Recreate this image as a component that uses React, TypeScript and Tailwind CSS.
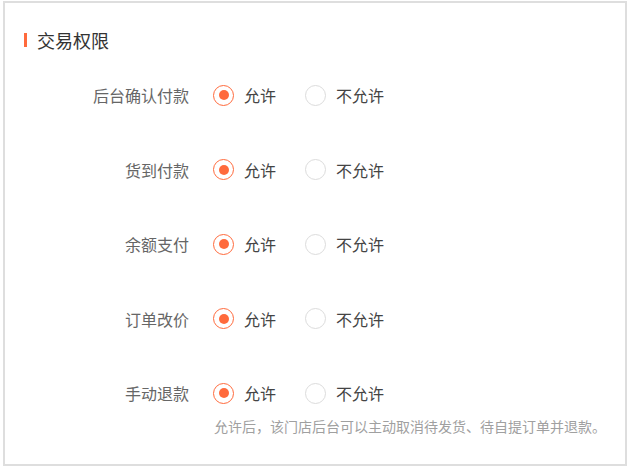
const rows = ["后台确认付款", "货到付款", "余额支付", "订单改价", "手动退款"]

function Radio({ checked }: { checked: boolean }) {
  return (
    <span
      className={
        checked
          ? "shrink-0 w-[21px] h-[21px] rounded-full border border-[#ff6a3c] flex items-center justify-center"
          : "shrink-0 w-[21px] h-[21px] rounded-full border border-[#dcdcdc] block"
      }
    >
      {checked && <span className="w-[10px] h-[10px] rounded-full bg-[#ff6a3c]" />}
    </span>
  )
}

export default function App() {
  return (
    <div className="w-[630px] h-[469px] bg-white pl-[3px] pt-[1px] font-['Noto_Sans_CJK_SC','Noto_Sans',sans-serif]">
      <div className="w-[624px] h-[465px] border-2 border-[#dedede] bg-white">
        {/* Title */}
        <div className="pl-[19px] pt-[25px] flex items-center h-[49px]">
          <span className="w-[3px] h-[14px] bg-[#ff6a3c] mr-[10px]" />
          <span className="text-[18px] leading-6 text-[#333]">交易权限</span>
        </div>

        <div className="mt-[28px] flex flex-col gap-[44.5px]">
          {rows.map((label, i) => (
            <div key={label} className="flex">
              <div className="w-[184px] text-right text-[16px] leading-[30px] text-[#666]">
                {label}
              </div>
              <div className="ml-[24px] flex flex-col">
                <div className="flex items-center h-[30px] text-[16px] text-[#444]">
                  <Radio checked />
                  <span className="ml-[10px]">允许</span>
                  <span className="ml-[29px] flex items-center">
                    <Radio checked={false} />
                  </span>
                  <span className="ml-[10px]">不允许</span>
                </div>
                {i === rows.length - 1 && (
                  <div className="mt-[8px] ml-px text-[14px] leading-5 text-[#a0a0a0] whitespace-nowrap">
                    允许后，该门店后台可以主动取消待发货、待自提订单并退款。
                  </div>
                )}
              </div>
            </div>
          ))}
        </div>
      </div>
    </div>
  )
}
